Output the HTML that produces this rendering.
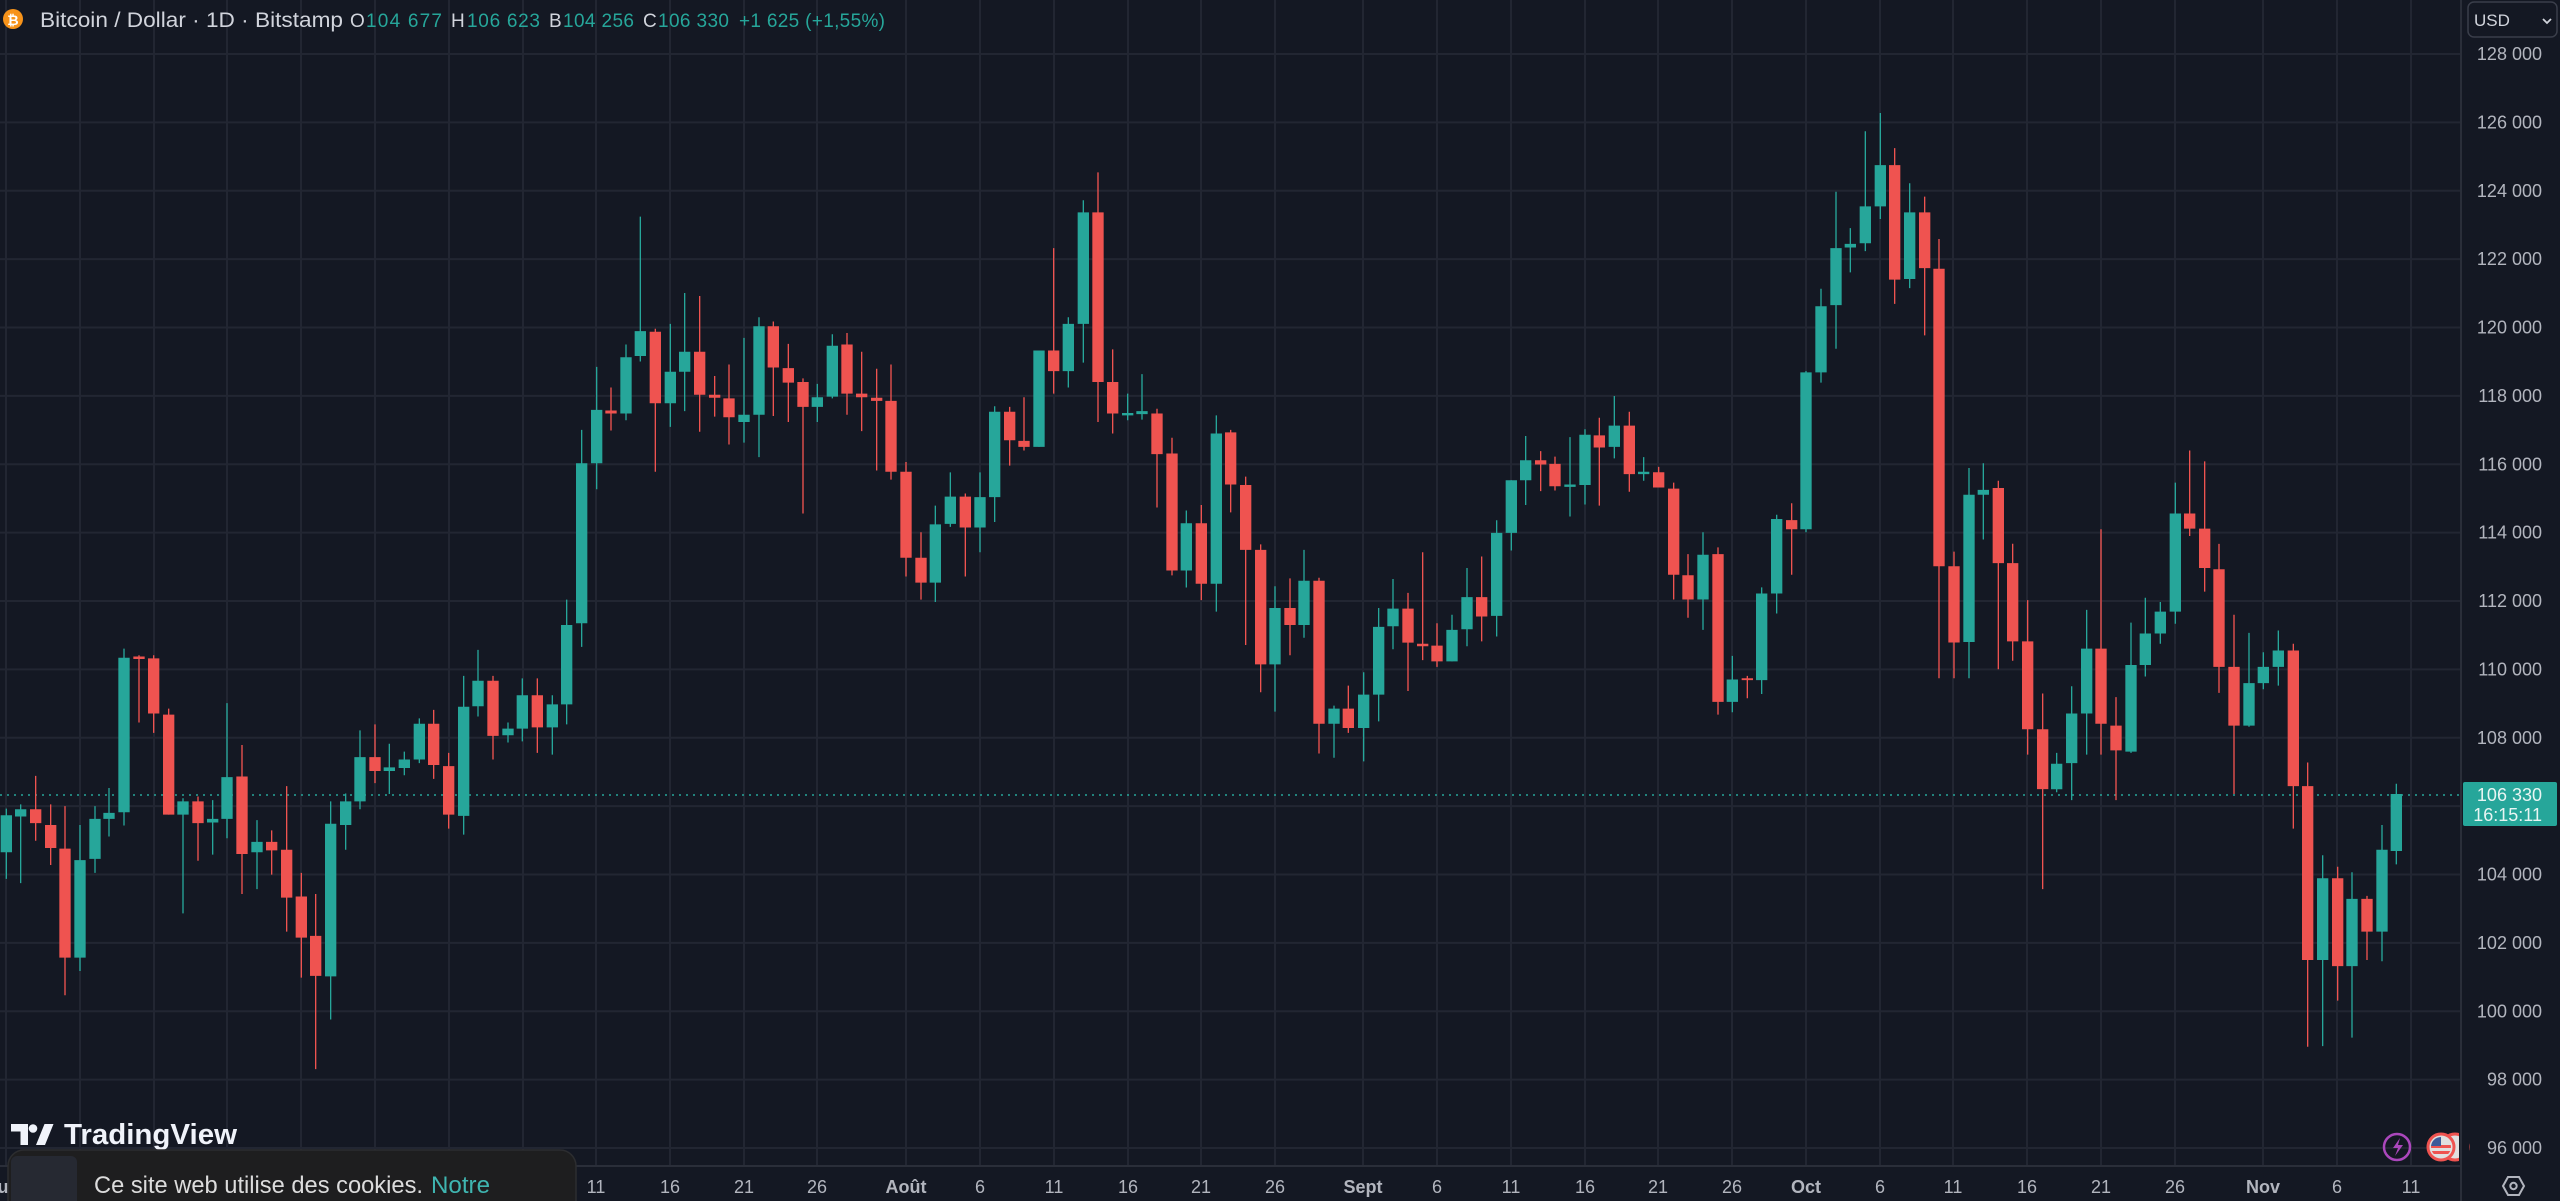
<!DOCTYPE html>
<html><head><meta charset="utf-8"><style>
html,body{margin:0;padding:0;background:#141823;overflow:hidden}
svg{display:block}
text{font-family:"Liberation Sans",sans-serif}
</style></head><body>
<svg width="2560" height="1201" viewBox="0 0 2560 1201" xmlns="http://www.w3.org/2000/svg">
<rect width="2560" height="1201" fill="#141823"/>
<g stroke="#222632" stroke-width="2">
<path d="M0 54H2460M0 122.4H2460M0 190.8H2460M0 259.1H2460M0 327.5H2460M0 395.9H2460M0 464.3H2460M0 532.6H2460M0 601H2460M0 669.4H2460M0 737.8H2460M0 806.1H2460M0 874.5H2460M0 942.9H2460M0 1011.3H2460M0 1079.6H2460M0 1148H2460"/>
<path d="M6 0V1166M80 0V1166M154 0V1166M227 0V1166M301 0V1166M375 0V1166M449 0V1166M523 0V1166M596 0V1166M670 0V1166M744 0V1166M817 0V1166M906 0V1166M980 0V1166M1054 0V1166M1128 0V1166M1201 0V1166M1275 0V1166M1363 0V1166M1437 0V1166M1511 0V1166M1585 0V1166M1658 0V1166M1732 0V1166M1806 0V1166M1880 0V1166M1953 0V1166M2027 0V1166M2101 0V1166M2175 0V1166M2263 0V1166M2337 0V1166M2411 0V1166"/>
</g>
<path d="M0 1166H2460M2461 0V1201" stroke="#2a2e39" stroke-width="2"/>
<path d="M0 795H2460" stroke="#26a69a" stroke-width="1.5" stroke-dasharray="2 5"/>

<g fill="none">
<g transform="translate(0,150) scale(0.33333,0.60588)">
<path stroke="#26a69a" stroke-width="4" d="M19 1087V1203M62 1080V1210M240 1114V1355M285 1083V1193M327 1053V1133M372 823V1115M549 1070V1260M638 1073V1163M681 913V1136M771 1106V1220M992 1075V1435M1037 1062V1155M1080 958V1088M1168 980V1063M1213 993V1032"/>
<path stroke="#26a69a" stroke-width="34" d="M19 1098V1159M62 1088V1100M240 1172V1333M285 1104V1170M327 1094V1104M372 838V1093M549 1075V1097M638 1104V1110M681 1035V1104M771 1142V1159M992 1112V1364M1037 1075V1114M1080 1002V1075M1168 1019V1025M1213 1006V1020"/>
<path stroke="#ef5350" stroke-width="4" d="M107 1033V1140M152 1080V1180M195 1083V1395M417 834V945M461 834V962M506 922V1097M594 1067V1173M726 982V1228M815 1123V1196M860 1050V1290M904 1193V1366M947 1228V1517M1125 948V1045"/>
<path stroke="#ef5350" stroke-width="34" d="M107 1088V1111M152 1114V1152M195 1153V1333M417 836V840M461 839V930M506 932V1097M594 1075V1111M726 1034V1162M815 1142V1156M860 1155V1234M904 1232V1300M947 1297V1363M1125 1002V1025"/>
</g>
<g transform="translate(410,150) scale(0.33333,0.60588)">
<path stroke="#26a69a" stroke-width="4" d="M28 938V1012M161 868V1130M204 825V935M294 945V978M337 872V976M427 900V998M470 742V948M515 462V820M560 358V560M648 321V446M691 110V349M781 287V457M824 236V431M1002 310V483M1047 276V507M1222 386V449"/>
<path stroke="#26a69a" stroke-width="34" d="M28 947V1006M161 919V1099M204 876V918M294 955V966M337 900V955M427 915V953M470 784V915M515 517V781M560 429V517M648 342V435M691 299V340M781 366V418M824 333V366M1002 437V449M1047 291V437M1222 408V424"/>
<path stroke="#ef5350" stroke-width="4" d="M71 924V1038M116 995V1120M249 868V1006M382 872V995M603 392V463M736 295V531M869 241V465M914 373V440M957 354V486M1090 283V439M1135 320V449M1179 377V600"/>
<path stroke="#ef5350" stroke-width="34" d="M71 947V1015M116 1017V1097M249 876V967M382 900V953M603 430V435M736 300V418M869 333V404M914 404V409M957 410V441M1090 291V359M1135 360V384M1179 383V424"/>
</g>
<g transform="translate(820,150) scale(0.33333,0.60588)">
<path stroke="#26a69a" stroke-width="4" d="M37 304V410M346 587V746M391 532V622M480 532V664M524 423V614M657 331V490M745 276V392M790 83V351M923 402V446M966 370V445M1099 595V722M1189 438V762"/>
<path stroke="#26a69a" stroke-width="34" d="M37 323V407M346 618V714M391 572V617M480 573V623M524 432V573M657 331V490M745 287V365M790 103V287M923 434V438M966 431V436M1099 616V694M1189 468V716"/>
<path stroke="#ef5350" stroke-width="4" d="M81 302V437M125 333V464M170 361V529M213 354V544M258 515V704M303 631V742M436 567V704M569 424V521M612 408V496M701 162V402M834 37V449M878 329V468M1011 427V590M1056 475V702M1144 586V743M1232 462V598"/>
<path stroke="#ef5350" stroke-width="34" d="M81 321V402M125 402V408M170 409V414M213 414V531M258 531V673M303 673V714M436 572V623M569 432V479M612 480V490M701 331V365M834 103V383M878 383V435M1011 435V502M1056 501V694M1144 616V716M1232 466V552"/>
</g>
<g transform="translate(1230,150) scale(0.33333,0.60588)">
<path stroke="#26a69a" stroke-width="4" d="M135 720V927M222 660V805M312 917V1003M401 862V1009M446 756V943M489 708V824M666 767V844M711 690V819M800 611V803M844 545V661M887 472V586M1020 474V605M1065 461V585M1153 406V509M1241 507V546"/>
<path stroke="#26a69a" stroke-width="34" d="M135 756V849M222 711V784M312 922V947M401 899V954M446 787V899M489 757V786M666 792V844M711 738V791M800 632V769M844 545V632M887 512V545M1020 552V556M1065 470V553M1153 455V490M1241 531V535"/>
<path stroke="#ef5350" stroke-width="4" d="M47 539V817M92 651V895M180 707V834M267 706V996M355 884V962M534 731V893M578 664V842M621 781V853M755 671V811M932 497V563M975 506V562M1108 442V587M1198 432V564"/>
<path stroke="#ef5350" stroke-width="34" d="M47 553V660M92 660V849M180 756V784M267 711V947M355 922V954M534 757V813M578 815V819M621 818V844M755 738V770M932 512V519M975 518V555M1108 471V491M1198 455V535"/>
</g>
<g transform="translate(1640,50) scale(0.33333,0.60588)">
<path stroke="#26a69a" stroke-width="4" d="M189 796V957M277 1000V1093M365 887V1063M410 767V930M498 530V796M543 394V549M588 234V493M631 294V367M676 134V332M721 104V279M809 220V393M987 690V1037M1030 682V808"/>
<path stroke="#26a69a" stroke-width="34" d="M189 833V907M277 1039V1076M365 897V1040M410 774V897M498 532V791M543 423V532M588 327V421M631 320V326M676 258V319M721 190V258M809 268V378M987 734V977M1030 726V734"/>
<path stroke="#ef5350" stroke-width="4" d="M56 688V722M101 714V907M144 832V937M234 821V1097M322 1033V1070M455 748V866M764 162V419M854 242V471M897 312V1037M942 828V1037M1075 711V1022M1118 815V1008M1163 908V1163M1208 1062V1385"/>
<path stroke="#ef5350" stroke-width="34" d="M56 697V722M101 724V866M144 867V907M234 832V1076M322 1037V1040M455 776V791M764 190V379M854 268V360M897 361V852M942 852V978M1075 723V847M1118 847V976M1163 976V1121M1208 1121V1220"/>
</g>
<g transform="translate(2050,150) scale(0.33333,0.60588)">
<path stroke="#26a69a" stroke-width="4" d="M20 995V1060M65 885V1073M110 759V998M243 780V995M286 739V869M331 746V815M376 549V782M597 797V952M640 829V890M685 793V884M818 1164V1479M906 1192V1465M996 1114V1339M1039 1046V1179"/>
<path stroke="#26a69a" stroke-width="34" d="M20 1013V1055M65 930V1012M110 823V930M243 850V993M286 798V850M331 762V798M376 600V762M597 880V950M640 853V880M685 826V853M818 1202V1337M906 1236V1347M996 1155V1290M1039 1063V1157"/>
<path stroke="#ef5350" stroke-width="4" d="M153 626V998M198 903V1073M419 496V637M464 514V729M507 650V896M552 767V1063M730 815V1120M773 1011V1480M863 1183V1404M951 1231V1337"/>
<path stroke="#ef5350" stroke-width="34" d="M153 823V947M198 950V991M419 600V625M464 625V690M507 692V853M552 853V950M730 826V1050M773 1050V1337M863 1202V1347M951 1236V1290"/>
</g>
</g>

<g fill="#b2b5be" font-size="18" text-anchor="end">
<text x="2542" y="60">128 000</text>
<text x="2542" y="128.4">126 000</text>
<text x="2542" y="196.8">124 000</text>
<text x="2542" y="265.1">122 000</text>
<text x="2542" y="333.5">120 000</text>
<text x="2542" y="401.9">118 000</text>
<text x="2542" y="470.3">116 000</text>
<text x="2542" y="538.6">114 000</text>
<text x="2542" y="607">112 000</text>
<text x="2542" y="675.4">110 000</text>
<text x="2542" y="743.8">108 000</text>
<text x="2542" y="880.5">104 000</text>
<text x="2542" y="948.9">102 000</text>
<text x="2542" y="1017.3">100 000</text>
<text x="2542" y="1085.6">98 000</text>
<text x="2542" y="1154">96 000</text>
</g>
<rect x="2463" y="782" width="94" height="44" rx="2" fill="#26a69a"/>
<text x="2542" y="801" fill="#e8f5f3" font-size="18" text-anchor="end">106 330</text>
<text x="2542" y="821" fill="#e8f5f3" font-size="18" text-anchor="end">16:15:11</text>

<rect x="2468" y="2" width="89" height="35" rx="6" fill="#141823" stroke="#3a3e4a" stroke-width="1.5"/>
<text x="2474" y="26" fill="#d1d4dc" font-size="17">USD</text>
<path d="M2543 19l4 4 4-4" fill="none" stroke="#d1d4dc" stroke-width="1.8"/>

<g fill="#b2b5be" font-size="18" text-anchor="middle">
<text x="6" y="1193" font-weight="bold">Juin</text><text x="80" y="1193">6</text><text x="154" y="1193">11</text><text x="227" y="1193">16</text><text x="301" y="1193">21</text><text x="375" y="1193">26</text><text x="449" y="1193" font-weight="bold">Juil</text><text x="523" y="1193">6</text>
<text x="596" y="1193">11</text><text x="670" y="1193">16</text><text x="744" y="1193">21</text><text x="817" y="1193">26</text>
<text x="906" y="1193" font-weight="bold">Août</text><text x="980" y="1193">6</text><text x="1054" y="1193">11</text><text x="1128" y="1193">16</text><text x="1201" y="1193">21</text><text x="1275" y="1193">26</text>
<text x="1363" y="1193" font-weight="bold">Sept</text><text x="1437" y="1193">6</text><text x="1511" y="1193">11</text><text x="1585" y="1193">16</text><text x="1658" y="1193">21</text><text x="1732" y="1193">26</text>
<text x="1806" y="1193" font-weight="bold">Oct</text><text x="1880" y="1193">6</text><text x="1953" y="1193">11</text><text x="2027" y="1193">16</text><text x="2101" y="1193">21</text><text x="2175" y="1193">26</text>
<text x="2263" y="1193" font-weight="bold">Nov</text><text x="2337" y="1193">6</text><text x="2411" y="1193">11</text>
</g>
<path d="M2503 1186l5-9h11l5 9-5 9h-11z" fill="none" stroke="#b2b5be" stroke-width="2"/>
<circle cx="2513.5" cy="1186" r="3.2" fill="none" stroke="#b2b5be" stroke-width="2"/>

<circle cx="2397" cy="1147" r="13" fill="none" stroke="#ab47bc" stroke-width="2.5"/>
<path d="M2400 1138l-7 10h5l-3 8 8-11h-5z" fill="#ab47bc"/>
<circle cx="2455" cy="1147" r="13" fill="#e0e0e0" stroke="#ef5350" stroke-width="3"/>
<circle cx="2441" cy="1147" r="13" fill="#e0e0e0" stroke="#ef5350" stroke-width="3"/>
<defs><clipPath id="fc"><circle cx="2441" cy="1147" r="10"/></clipPath></defs>
<g clip-path="url(#fc)"><rect x="2429" y="1145" width="24" height="3" fill="#ef5350"/><rect x="2429" y="1151" width="24" height="3" fill="#ef5350"/><rect x="2429" y="1137" width="12" height="9" fill="#3c5a9a"/></g>
<rect x="2459" y="1130" width="10" height="34" fill="#141823"/>
<path d="M2461 1130V1166" stroke="#2a2e39" stroke-width="2"/>

<circle cx="13" cy="19" r="10" fill="#f7931a"/>
<text x="13" y="25" fill="#fff" font-size="14" font-weight="bold" text-anchor="middle">₿</text>
<text x="40" y="27" fill="#d1d4dc" font-size="21" textLength="303" lengthAdjust="spacingAndGlyphs">Bitcoin / Dollar · 1D · Bitstamp</text>
<g font-size="19">
<text x="350" y="27" fill="#d1d4dc">O</text><text x="366" y="27" fill="#26a69a" textLength="76">104 677</text>
<text x="451" y="27" fill="#d1d4dc">H</text><text x="467" y="27" fill="#26a69a" textLength="73">106 623</text>
<text x="549" y="27" fill="#d1d4dc">B</text><text x="563" y="27" fill="#26a69a" textLength="71">104 256</text>
<text x="643" y="27" fill="#d1d4dc">C</text><text x="658" y="27" fill="#26a69a" textLength="71">106 330</text>
<text x="739" y="27" fill="#26a69a" textLength="146">+1 625 (+1,55%)</text>
</g>

<path d="M11 1124h17v21h-7.5v-13.5H11z" fill="#f0f3fa"/>
<circle cx="33" cy="1128.5" r="4.3" fill="#f0f3fa"/>
<path d="M36 1145l8.5-21h9l-8.5 21z" fill="#f0f3fa"/>
<text x="64" y="1144" fill="#f0f3fa" font-size="29" font-weight="bold" textLength="173" lengthAdjust="spacingAndGlyphs">TradingView</text>

<rect x="8" y="1150" width="568" height="90" rx="16" fill="#1e1e1f" stroke="#2c2d30" stroke-width="1.5"/>
<rect x="11" y="1156" width="66" height="60" rx="6" fill="#262932"/>
<text x="94" y="1193" font-size="24" fill="#dcdcdc" textLength="329" lengthAdjust="spacingAndGlyphs">Ce site web utilise des cookies.</text>
<text x="431" y="1193" font-size="24" fill="#3fb5b0" textLength="59" lengthAdjust="spacingAndGlyphs">Notre</text>
</svg>
</body></html>
